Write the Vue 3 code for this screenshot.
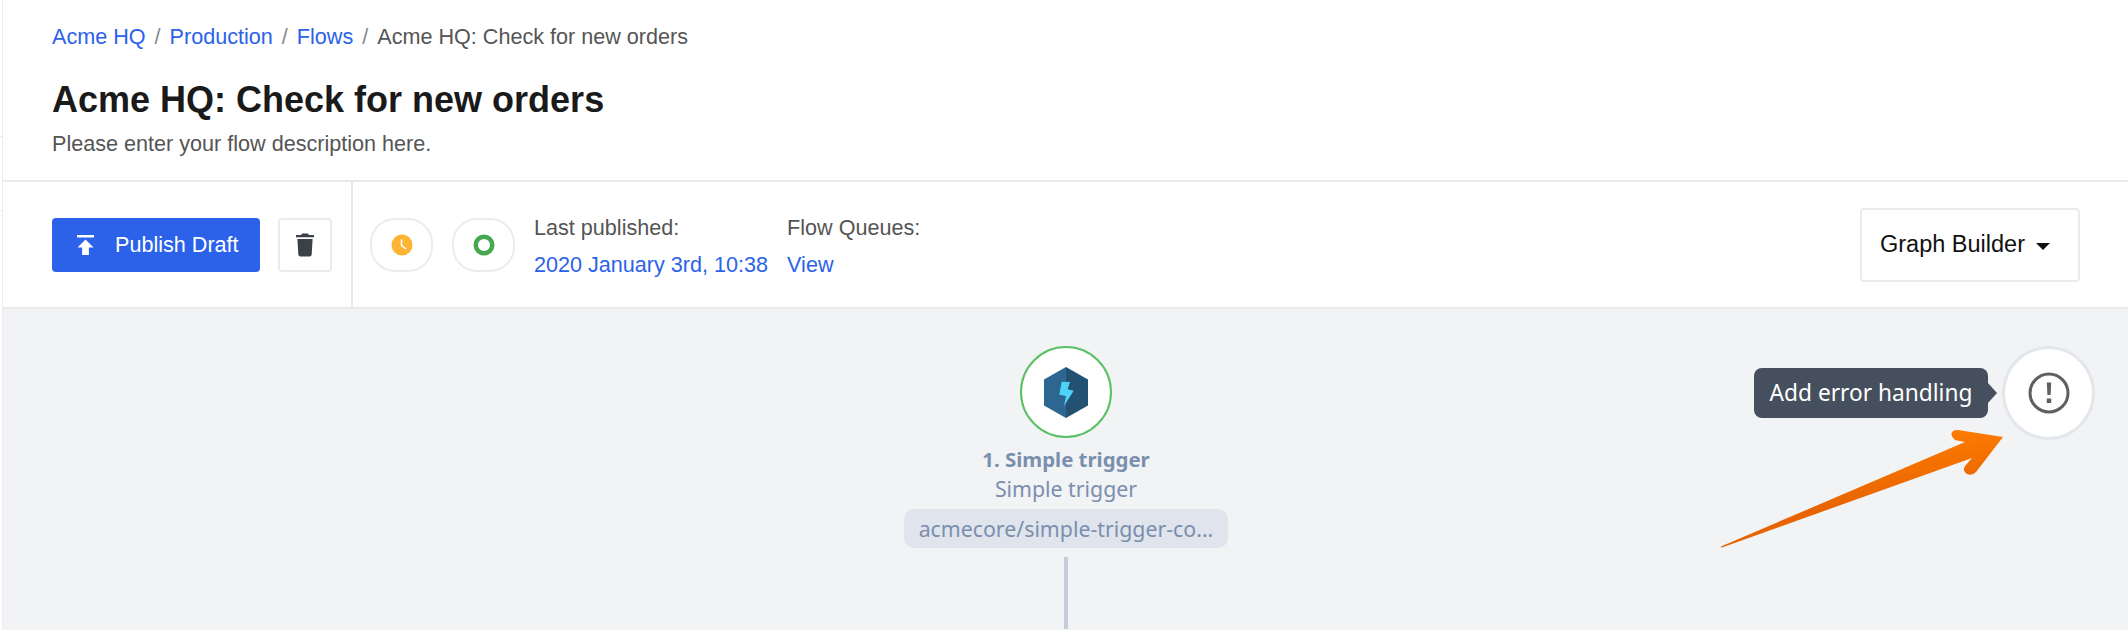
<template>
  <div class="page">
    <div class="gutter"></div>
    <div class="main">
      <header class="head">
        <nav class="crumbs">
          <template v-for="c in crumbs" :key="c">
            <a class="link">{{ c }}</a>
            <span class="sep">/</span>
          </template>
          <span class="current">Acme HQ: Check for new orders</span>
        </nav>
        <h1 class="title">Acme HQ: Check for new orders</h1>
        <p class="desc">Please enter your flow description here.</p>
      </header>

      <div class="toolbar">
        <div class="actions">
          <button class="publish">
            <svg class="publish-icon" width="17" height="20" viewBox="0 0 17 20">
              <path d="M0 0h17v2.400H0z M8.500 4.400l8 8.200h-4.600V20H5.100v-7.400H.5z" fill="#fff" />
            </svg>
            Publish Draft
          </button>
          <button class="trash">
            <svg width="18" height="24" viewBox="0 0 18 24">
              <path d="M6 .5h6l.8 1.600H18v2.200H0V2.100h5.200z M1.400 6h15.200l-.9 15.600c-.1 1.100-.9 1.900-2 1.900H4.300c-1.100 0-1.900-.8-2-1.900z" fill="#3c4049" />
            </svg>
          </button>
        </div>
        <div class="meta">
          <span class="round">
            <svg width="22" height="22" viewBox="0 0 22 22">
              <circle cx="11" cy="11" r="10.500" fill="#fdb432" />
              <path d="M10.500 6v5.500l4 3" fill="none" stroke="#fff" stroke-width="1.500" stroke-linecap="round" />
            </svg>
          </span>
          <span class="round">
            <svg width="22" height="22" viewBox="0 0 22 22">
              <circle cx="11" cy="11" r="8.300" fill="none" stroke="#46a84f" stroke-width="4.400" />
            </svg>
          </span>
          <div class="info">
            <span class="label">Last published:</span>
            <a class="link">2020 January 3rd, 10:38</a>
          </div>
          <div class="info">
            <span class="label">Flow Queues:</span>
            <a class="link">View</a>
          </div>
          <button class="builder">Graph Builder <i class="caret"></i></button>
        </div>
      </div>

      <div class="canvas">
        <div class="node">
          <div class="node-circle">
            <svg width="44" height="51" viewBox="0 0 44 51">
              <path d="M22 0L0 12.500v26L22 51z" fill="#2d6690" />
              <path d="M22 0l22 12.500v26L22 51z" fill="#235172" />
              <path d="M17.700 14.700L26 15L23.700 22.300L29.700 23.700L20 39L22 29L15.300 27.700Z" fill="#4ed2f7" />
            </svg>
          </div>
          <div class="node-title">1. Simple trigger</div>
          <div class="node-sub">Simple trigger</div>
          <div class="node-pill">acmecore/simple-trigger-co...</div>
          <div class="node-line"></div>
        </div>

        <div class="error-tip">Add error handling</div>
        <div class="error-btn">
          <svg width="42" height="42" viewBox="0 0 42 42">
            <circle cx="21" cy="21" r="19" fill="none" stroke="#5f5f5f" stroke-width="3" />
            <path d="M18.800 10.500h4.400l-.6 12.500h-3.200z M18.800 26.500h4.400v4.500h-4.400z" fill="#5f5f5f" />
          </svg>
        </div>
        <svg class="arrow" width="290" height="130" viewBox="0 0 290 130">
          <defs>
            <linearGradient id="arrowFill" x1="0.45" y1="0.1" x2="0.6" y2="0.6">
              <stop offset="0" stop-color="#ff7d00" />
              <stop offset="1" stop-color="#e86400" />
            </linearGradient>
          </defs>
          <path d="M1 126.500L245 22L235 20Q230 16 232 12Q234 9.500 238 10L283 17L256 52Q252 56 247 54Q242 51 245 46L252 38L2 127.500Q0 127.500 1 126.500Z" fill="url(#arrowFill)" />
        </svg>
      </div>
    </div>
  </div>
</template>

<script setup>
const crumbs = ['Acme HQ', 'Production', 'Flows']
</script>

<style>
html, body {
  margin: 0;
  background: #fff;
}
</style>

<style scoped>
.page {
  display: flex;
  width: 2128px;
  height: 630px;
  overflow: hidden;
  font-family: "Liberation Sans", Arial, sans-serif;
  color: #555;
}

.gutter {
  width: 2px;
  border-right: 1px solid #ececec;
  background:
    linear-gradient(#ececec, #ececec) 0 136px / 2px 1px no-repeat,
    linear-gradient(#ececec, #ececec) 0 210px / 2px 1px no-repeat,
    #fff;
}

.main {
  flex: 1;
  display: flex;
  flex-direction: column;
  min-height: 0;
}

.head {
  flex: none;
  height: 182px;
  box-sizing: border-box;
  padding: 25px 49px 0;
  background: #fff;
  border-bottom: 2px solid #e9e9e9;
}

.crumbs {
  display: flex;
  gap: 9px;
  font-size: 21.600px;
  line-height: 24px;
}

.link {
  color: #2b62e9;
}

.sep {
  color: #888;
}

.title {
  margin: 30px 0 0;
  font-size: 36px;
  line-height: 42px;
  font-weight: 700;
  color: #1a1a1a;
}

.desc {
  margin: 11px 0 0;
  font-size: 21.600px;
  line-height: 24px;
}

.toolbar {
  flex: none;
  display: flex;
  height: 127px;
  box-sizing: border-box;
  background: #fff;
  border-bottom: 2px solid #e9e9e9;
}

.actions {
  display: flex;
  align-items: center;
  gap: 18px;
  width: 350px;
  padding: 0 0 0 49px;
  box-sizing: border-box;
  border-right: 2px solid #e9e9e9;
}

button {
  font-family: inherit;
  padding: 0;
}

.publish {
  display: flex;
  align-items: center;
  width: 208px;
  height: 54px;
  padding-left: 25px;
  border: 0;
  border-radius: 4px;
  background: #2b62e9;
  color: #fff;
  font-size: 21.600px;
  box-sizing: border-box;
}

.publish-icon {
  margin-right: 21px;
}

.trash {
  display: flex;
  align-items: center;
  justify-content: center;
  width: 54px;
  height: 54px;
  box-sizing: border-box;
  border: 2px solid #ebebeb;
  border-radius: 4px;
  background: #fff;
}

.meta {
  flex: 1;
  display: flex;
  align-items: center;
  gap: 19px;
  padding: 0 48px 0 17px;
}

.round {
  display: flex;
  align-items: center;
  justify-content: center;
  width: 63px;
  height: 54px;
  box-sizing: border-box;
  border: 2px solid #ececec;
  border-radius: 25px;
}

.info {
  display: flex;
  flex-direction: column;
  gap: 13px;
  margin-top: 4px;
  font-size: 21.600px;
  line-height: 24px;
}

.builder {
  display: flex;
  align-items: center;
  margin-left: auto;
  width: 220px;
  height: 74px;
  padding-left: 18px;
  box-sizing: border-box;
  border: 2px solid #ebebeb;
  border-radius: 4px;
  background: #fff;
  color: #111;
  font-size: 23.500px;
}

.caret {
  margin: 3px 0 0 11px;
  border-left: 7px solid transparent;
  border-right: 7px solid transparent;
  border-top: 7px solid #111;
}

.canvas {
  position: relative;
  flex: 1;
  min-height: 0;
  display: flex;
  justify-content: center;
  background: #f1f3f5;
  font-family: "Noto Sans", sans-serif;
}

.node {
  display: flex;
  flex-direction: column;
  align-items: center;
  margin-top: 37px;
  margin-left: 1px;
  color: #7a8fae;
}

.node-circle {
  flex: none;
  display: flex;
  align-items: center;
  justify-content: center;
  width: 92px;
  height: 92px;
  box-sizing: border-box;
  border: 2px solid #5bc066;
  border-radius: 50%;
  background: #fff;
}

.node-title {
  margin-top: 7px;
  font-size: 20.400px;
  line-height: 29px;
  font-weight: 700;
}

.node-sub {
  font-size: 21.300px;
  line-height: 29px;
}

.node-pill {
  margin-top: 6px;
  padding: 0 15px;
  height: 39px;
  line-height: 39px;
  border-radius: 10px;
  background: #e0e4ec;
  font-size: 21.300px;
}

.node-line {
  flex: none;
  width: 4px;
  height: 72px;
  margin-top: 9px;
  background: #c3cddc;
}

.error-tip {
  position: absolute;
  left: 1751px;
  top: 59px;
  width: 234px;
  height: 50px;
  line-height: 50px;
  text-align: center;
  border-radius: 8px;
  background: #454f5d;
  color: #fff;
  font-size: 22.700px;
}

.error-tip::after {
  content: "";
  position: absolute;
  left: 100%;
  top: 15px;
  border-left: 9px solid #454f5d;
  border-top: 10px solid transparent;
  border-bottom: 10px solid transparent;
}

.error-btn {
  position: absolute;
  left: 1999px;
  top: 37px;
  display: flex;
  align-items: center;
  justify-content: center;
  width: 93px;
  height: 94px;
  box-sizing: border-box;
  border: 3px solid #e3e6ea;
  border-radius: 50%;
  background: #fff;
}

.arrow {
  position: absolute;
  left: 1717px;
  top: 111px;
}
</style>
